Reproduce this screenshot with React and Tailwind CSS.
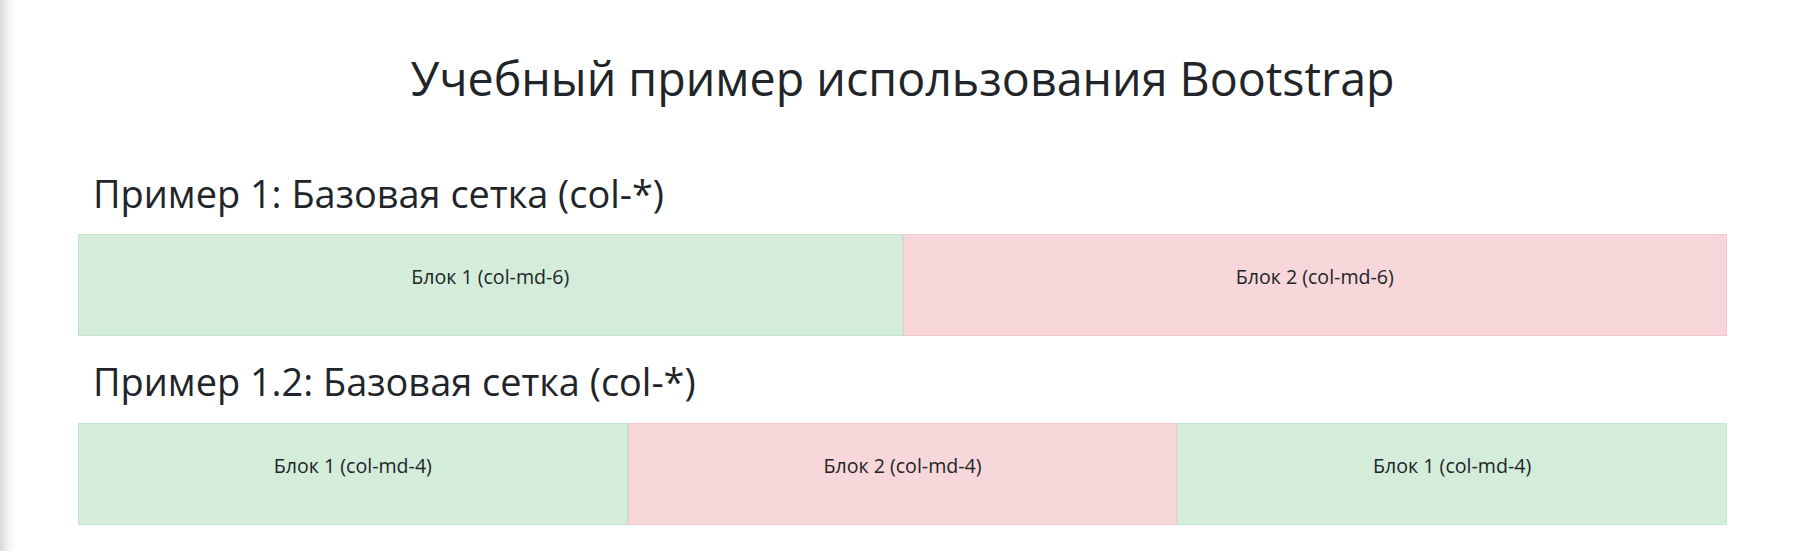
import React from 'react'

const green = 'bg-[#d4edda] border border-[#c3e6cb]'
const red = 'bg-[#f8d7da] border border-[#f5c6cb]'

function Block({ tone, children }) {
  return (
    <div className={`${tone} h-[102px] pt-[28px] text-center text-[19.6px] leading-[27px] text-[#212529]`}>
      {children}
    </div>
  )
}

export default function App() {
  return (
    <div className="flex min-h-[551px] bg-white font-['Open_Sans',sans-serif] text-[#212529]">
      <div className="w-[16px] shrink-0 bg-gradient-to-r from-[#d9d9d9] via-[#f2f2f2] to-white" />
      <div className="flex-1 pt-[51px] pl-[62px] pr-[76px]">
        <h1 className="text-center text-[46.6px] leading-[55px] mb-[65px]">
          Учебный пример использования Bootstrap
        </h1>

        <h2 className="pl-[15px] text-[37.9px] leading-[44px] mb-[19px]">
          Пример 1: Базовая сетка (col-*)
        </h2>
        <div className="grid grid-cols-2">
          <Block tone={green}>Блок 1 (col-md-6)</Block>
          <Block tone={red}>Блок 2 (col-md-6)</Block>
        </div>

        <h2 className="mt-[23px] pl-[15px] text-[37.9px] leading-[44px] mb-[20px]">
          Пример 1.2: Базовая сетка (col-*)
        </h2>
        <div className="grid grid-cols-3">
          <Block tone={green}>Блок 1 (col-md-4)</Block>
          <Block tone={red}>Блок 2 (col-md-4)</Block>
          <Block tone={green}>Блок 1 (col-md-4)</Block>
        </div>
      </div>
    </div>
  )
}
